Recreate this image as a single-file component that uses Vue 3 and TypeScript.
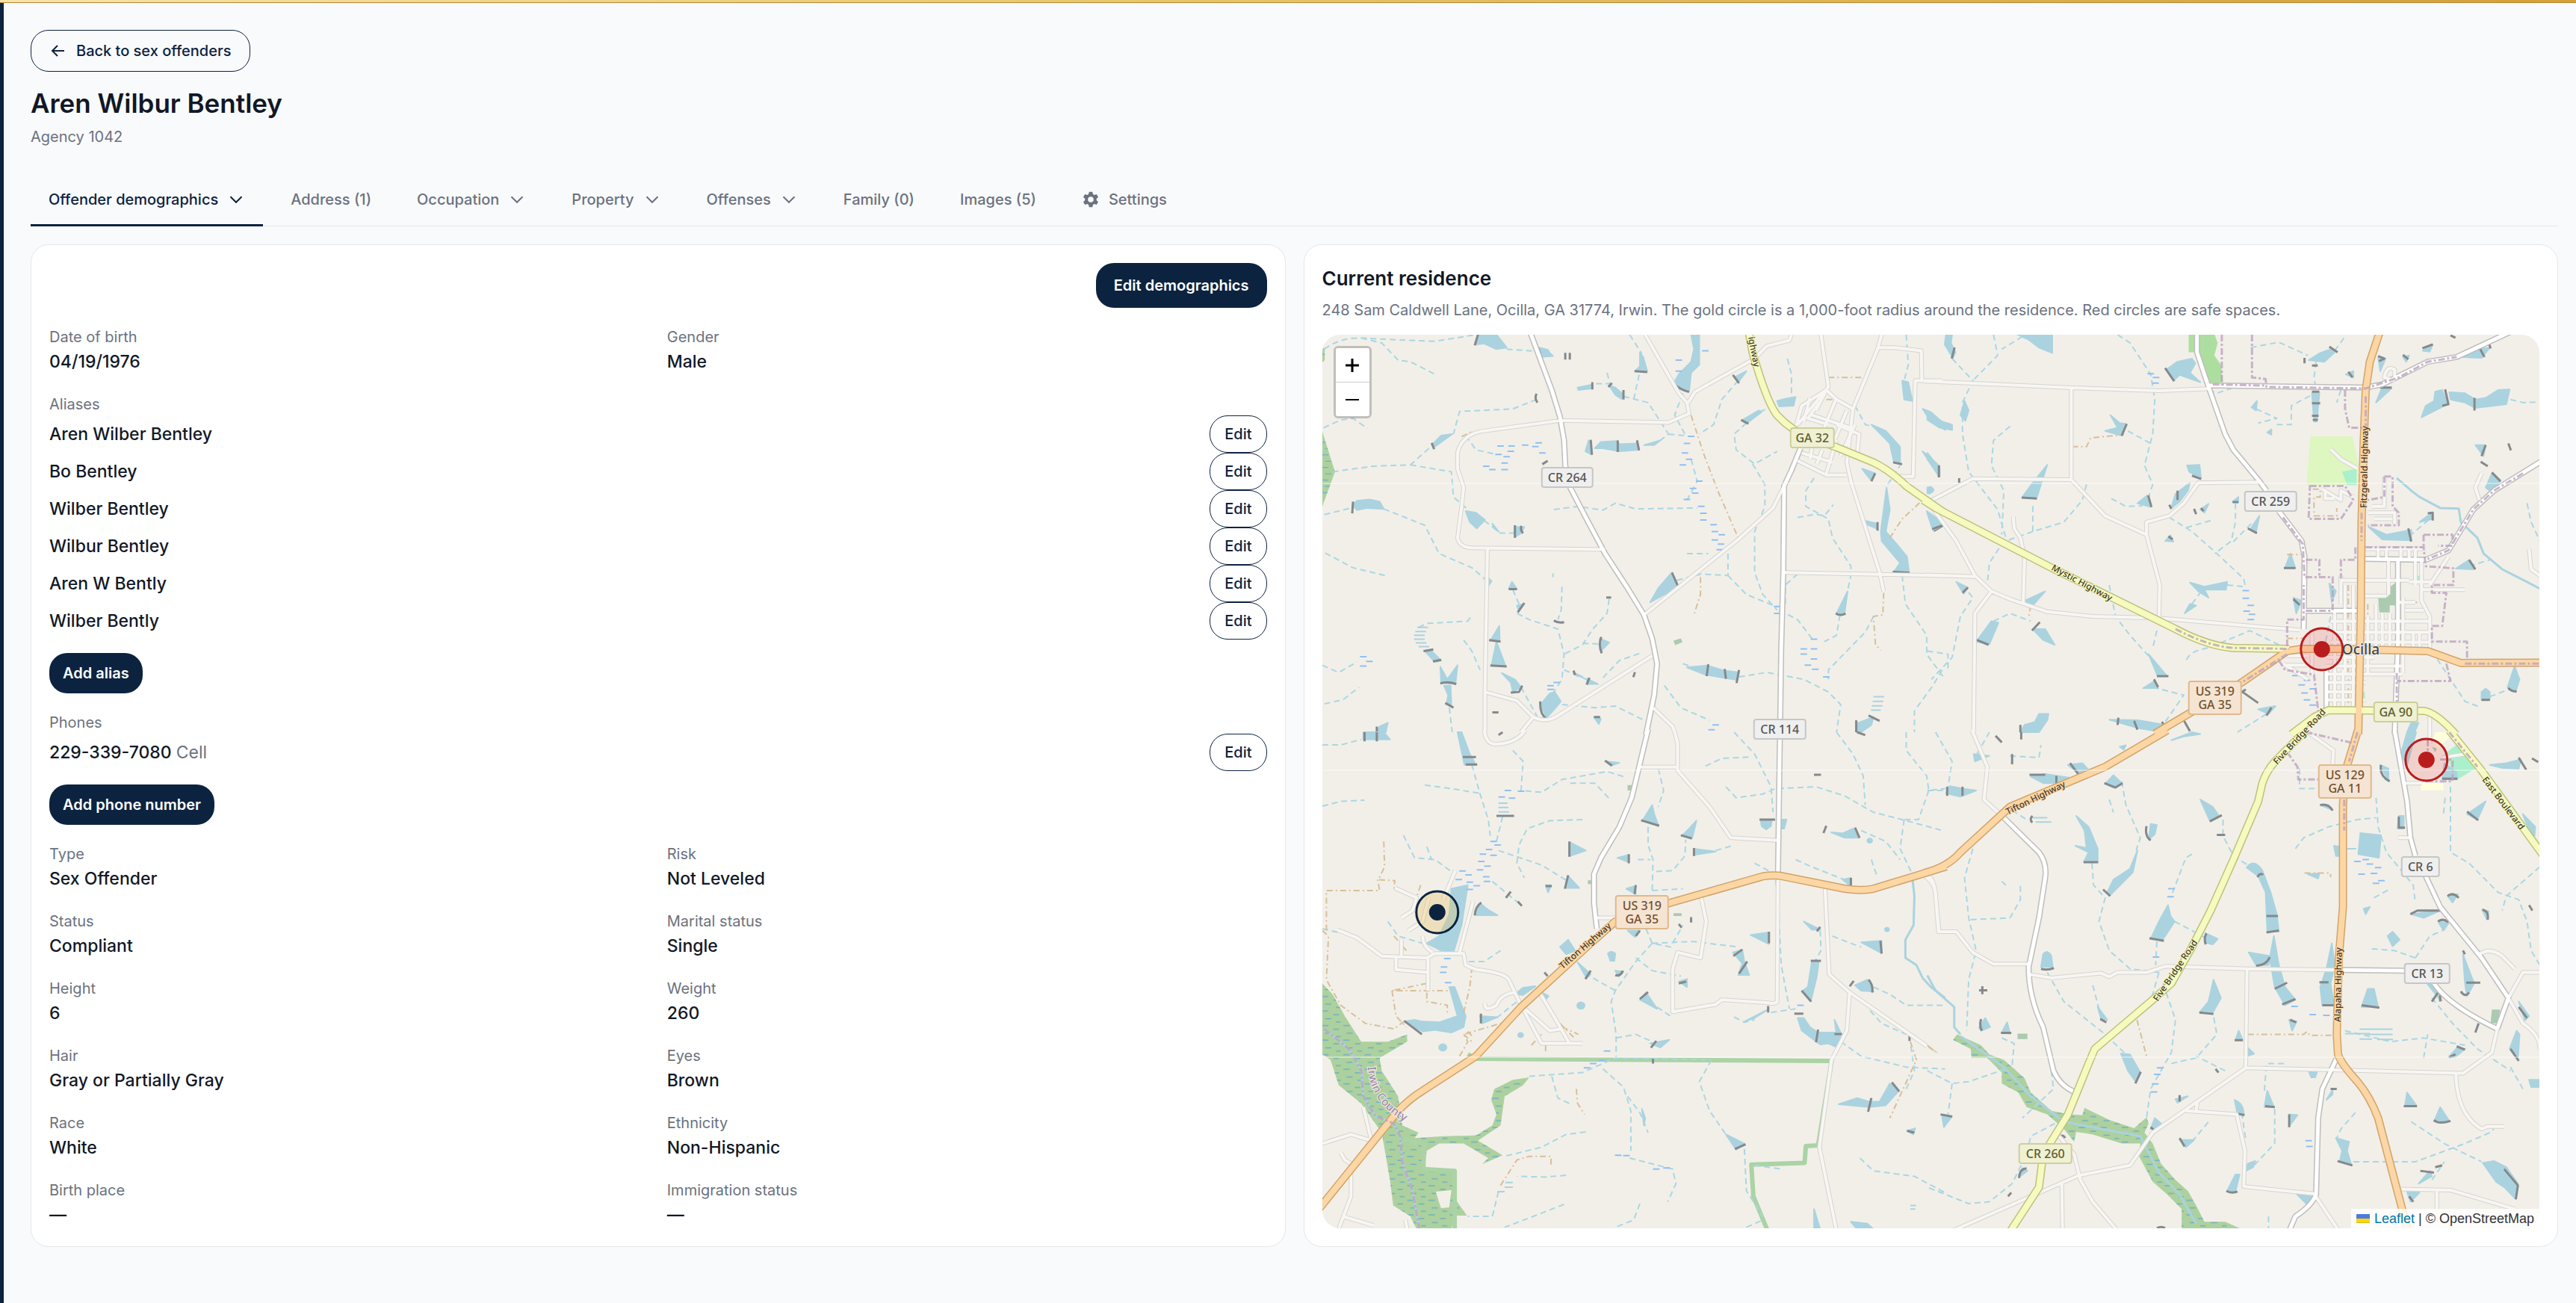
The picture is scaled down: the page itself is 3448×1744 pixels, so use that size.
<script setup lang="ts">
interface Field { label: string; value: string }
interface Tab { label: string; menu?: boolean; gear?: boolean; active?: boolean }
interface Sheet {
  at: string
  marsh?: string; wood?: string; golf?: string; green?: string; teal?: string; pale?: string
  water: string; streams: string; river?: string; stripes?: string; dams: string; tracks?: string
  bogs: number[][]
  minor: string; tertiary?: string; secondary?: string; primary?: string
  border?: string; reserve?: string
}
interface Shield { x: number; y: number; w: number; kind: string; lines: string[] }
interface RoadName { x: number; y: number; turn: number; text: string; kind: string; end?: boolean }

const tabs: Tab[] = [
  { label: 'Offender demographics', menu: true, active: true },
  { label: 'Address (1)' },
  { label: 'Occupation', menu: true },
  { label: 'Property', menu: true },
  { label: 'Offenses', menu: true },
  { label: 'Family (0)' },
  { label: 'Images (5)' },
  { label: 'Settings', gear: true },
]
const intro: Field[] = [
  { label: 'Date of birth', value: '04/19/1976' },
  { label: 'Gender', value: 'Male' },
]
const aliases = ['Aren Wilber Bentley', 'Bo Bentley', 'Wilber Bentley', 'Wilbur Bentley', 'Aren W Bently', 'Wilber Bently']
const details: Field[] = [
  { label: 'Type', value: 'Sex Offender' },
  { label: 'Risk', value: 'Not Leveled' },
  { label: 'Status', value: 'Compliant' },
  { label: 'Marital status', value: 'Single' },
  { label: 'Height', value: '6' },
  { label: 'Weight', value: '260' },
  { label: 'Hair', value: 'Gray or Partially Gray' },
  { label: 'Eyes', value: 'Brown' },
  { label: 'Race', value: 'White' },
  { label: 'Ethnicity', value: 'Non-Hispanic' },
  { label: 'Birth place', value: '—' },
  { label: 'Immigration status', value: '—' },
]

// The map is stored as four survey sheets, each with its own grid.
const sheets: Sheet[] = [
  {
    at: 'translate(-30 -128) scale(.54847 .42092)',
    marsh: 'M55 612L86 740L55 850ZM55 340L61 350V385L55 393Z',
    green: 'M912 1277L930 1270L934 1282L916 1291Z',
    water: 'M435 304H480L490 320L505 345L480 350L450 332L430 335ZM585 345L605 352L610 362L618 372L590 375ZM955 304H975L975 400L955 425L950 485L912 460L925 430L955 390L962 350ZM830 360L838 375L848 420H818L830 405ZM678 472L712 463V475L680 480ZM755 465L770 472L790 495L785 508L770 495ZM1060 440L1090 420L1070 455ZM1165 515L1185 508L1210 502L1205 530L1170 532ZM1078 577L1120 545L1127 550L1090 587ZM1470 450L1485 455L1495 515L1475 510ZM1520 540L1540 550L1575 590V607L1540 580ZM1395 590L1430 610L1465 660V715L1450 710L1440 650ZM1520 675L1560 720V755ZM1372 730L1405 745L1395 768ZM1432 790L1440 860L1430 930L1460 975L1482 1010L1487 1060L1450 1058L1465 1030L1420 960L1418 930ZM1530 865L1568 900L1545 925ZM1378 895L1410 905V922L1385 908ZM705 640L712 685L697 675ZM720 665L735 645L775 642L780 652L825 650L828 670L780 675L740 665ZM840 655L880 640L865 655ZM322 655L345 625L372 620L330 660ZM128 845L140 832L170 828L195 835L205 858L165 855L140 862ZM405 865L430 870L452 893L432 920L415 900ZM470 905L485 930L475 920ZM525 915L548 915L540 935L525 948ZM855 1155L875 1110L905 1065L925 1110L890 1130ZM510 1112L518 1090L530 1113ZM458 1075L468 1088L460 1103ZM466 1275L487 1230L488 1277ZM468 1355L480 1280L502 1357ZM493 1380L525 1400L540 1425L520 1440L515 1410ZM305 1310L320 1308L345 1340L330 1345ZM343 1360L360 1400L385 1355L380 1415L345 1412ZM352 1420H368L370 1480H358L362 1450ZM610 1445L622 1440L637 1470L618 1500L602 1522L588 1480ZM732 1270L755 1283L735 1310ZM700 1398L728 1415L703 1415ZM668 1378L690 1392L675 1388ZM945 1362L995 1356L1035 1372L1072 1378L1068 1402L1035 1395L990 1385ZM1337 1120L1330 1185L1320 1197L1310 1190ZM1360 1540L1400 1520L1395 1545L1370 1568H1360ZM185 1568L195 1550L215 1538L210 1568ZM1532 795Q1540 780 1547 798Q1540 815 1532 795ZM530 1165L548 1160L535 1182ZM718 1520L735 1525L730 1542Z',
    streams: 'M60 350Q100 310 160 315T330 325L430 304M150 315L200 330L240 385L270 390L330 430M505 350L590 358M578 510L520 540L440 545L390 548L375 620M58 600L100 575L130 570L165 602M80 740L180 722L270 718L320 660M270 718L370 740L375 820L410 860M60 876L125 855M205 858L305 910L340 1000L420 1045L455 1085M62 998L130 1045L215 1072M450 895L490 935H525M405 625L430 670L480 685M620 860L680 850L740 862L770 840L820 858L970 855M815 510L830 420M805 304L835 365M750 425L757 460H715M790 500L850 520L900 620L880 640M900 620L940 625M935 490L915 560L940 620M1070 450L1030 510L1010 590L975 620M1180 520L1120 550M1090 585L1060 620L1065 670L1110 715L1165 675M1105 715L1135 780V850L1110 930V1060L1130 1130L1165 1180M1190 380L1200 430V510M1255 760L1235 800V850L1290 890L1300 950L1345 1040V1070L1335 1130M1215 885L1260 875L1280 880L1302 845M955 700L970 770L945 830M1045 1000V1070L980 1065L920 1085M1045 1070L1090 1130L1165 1170M945 1000H997M1215 1065L1185 1100V1160M1480 304L1485 400L1475 450M1355 530L1380 590L1410 600M1435 780L1465 720M1470 1070L1478 1160L1530 1260V1320L1575 1400M640 1105L638 1180L630 1210M530 1190L560 1210L630 1240L645 1320L640 1400L620 1440M618 1063V1075M520 1115L535 1160M755 1145L750 1190L715 1240L690 1290L645 1320M690 1285L735 1288M645 1370L700 1400M740 1395L780 1340L835 1315M290 1235L310 1222L410 1215L418 1200M55 1355L95 1378L140 1345M60 1478L105 1465L145 1425M400 1275L420 1310L440 1370M540 1425L580 1520M640 1480L720 1490L770 1485L840 1530M365 1490L372 1568M890 1420L930 1490L1000 1530M935 1350L960 1362M1072 1392L1140 1378L1230 1400L1290 1440L1320 1480L1310 1568M1170 1180L1215 1210L1250 1270M1318 1195L1310 1260L1280 1280M1400 1200L1380 1250L1290 1370V1400M1568 1370L1545 1420L1500 1500V1568',
    stripes: 'M287 1235h26M282 1248h26M279 1260h26M279 1272h26M283 1284h26M290 1296h26M1400 1455h26M1398 1470h26M1396 1484h26M1394 1498h24',
    dams: 'M435 304L427 338M583 348L590 378M648 362V383M659 362V383M817 420L848 423M714 455V478M762 458L753 470M790 480V510M912 460Q930 480 950 486M1057 432L1072 458M1077 575L1095 587M578 492Q572 505 580 520M710 638L713 686M776 640V677M823 640L828 672M322 648L328 668M130 835L128 872M525 910V950M541 912Q537 925 545 935M908 1060L926 1112M510 1113H530M548 1157L532 1187M620 1213Q632 1222 645 1218M748 1140H760M462 1275L490 1280M465 1356L505 1359M302 1310L326 1305M325 1343L345 1338M343 1413Q360 1405 382 1415M515 1442L535 1440L543 1420M736 1265Q728 1290 737 1317M668 1372L672 1386M707 1395L700 1417M818 1377L814 1393M997 1352L993 1390M1037 1367L1040 1398M1072 1370L1066 1412M1308 1190Q1320 1200 1332 1190M1447 1058L1488 1061M1410 900V927M1547 928L1568 912M1404 745L1395 770M1448 710L1470 716M1388 1515L1415 1532M587 1470Q585 1510 602 1525M718 1520H733M470 1505H485M355 1475L375 1490M1560 720V758M1358 1530V1568M605 705L592 716M188 1550V1568',
    tracks: 'M955 560L985 680L1020 800L1070 950M1290 440H1380M978 1075V1130L963 1190M1425 1125L1423 1195L1400 1200L1405 1290L1418 1308M1440 950L1470 890L1520 830M395 628L420 612M1285 510H1310',
    bogs: [[490, 658], [517, 658], [550, 655], [583, 648], [485, 685], [515, 675], [505, 692], [455, 722], [500, 712], [470, 733], [500, 733], [592, 680], [575, 660], [945, 650], [955, 627], [940, 680], [950, 700], [935, 718], [975, 770], [960, 793], [965, 808], [945, 828], [980, 850], [985, 872], [985, 893], [1010, 908], [1013, 930], [1030, 940], [1013, 957], [1028, 970], [1025, 988], [925, 385], [990, 355], [925, 420], [155, 1328], [170, 1343], [155, 1358], [1165, 1168], [1165, 1190], [1255, 1272], [1230, 1303], [1255, 1303], [1230, 1320], [1255, 1335], [1240, 1355], [1258, 1368], [1285, 1392], [1015, 1545], [1005, 1560], [612, 1420], [627, 1410], [612, 1432]],
    minor: 'M843 304L925 490L945 520L950 555L900 583L635 577L440 612Q395 625 385 680V730L400 790L395 850L385 950Q390 980 420 982L745 987M458 982L452 1440L530 1468L570 1520Q600 1540 630 1515L860 1325M452 1440V1568M570 1520L540 1568M948 520L965 485L1110 380L1140 340L1195 322L1200 304M1272 304L1290 470L1215 590M1420 304L1410 350L1350 540L1335 710L1345 770L1415 1060L1425 1120M1412 345H1450L1517 355L1518 450H1568M1518 450H1502L1497 755H1455M1182 785L1155 855L1070 955L840 1195M1182 1060L1575 1070M1215 705L1285 750H1335M862 1490L910 1550L915 1568M1210 600L1225 530L1285 480L1310 510L1350 540M1245 505L1230 580M1268 520L1240 570L1290 590M1310 505L1280 600M1335 545L1305 640M1310 590L1365 620L1360 690M1355 590L1320 690M1250 560L1345 600M1225 680L1300 710M1310 640L1285 745M1250 665L1245 700M1275 670L1262 715M1285 480L1260 545',
    tertiary: 'M562 295L615 480L635 565L645 640L648 720L660 790L700 890L745 1000L800 1110L840 1195L860 1270L872 1350L865 1450L845 1575M1222 665L1200 735L1182 785L1180 1060L1175 1300L1172 1575',
    secondary: 'M1095 290L1105 360Q1140 520 1165 560Q1200 610 1250 635L1310 662L1400 710Q1440 735 1480 785L1575 872',
  },
  {
    at: 'translate(810 -128) scale(.55357 .42092)',
    wood: 'M632 304H695L702 330L694 370L710 400L715 455L678 458L650 360H632Z',
    golf: 'M926 627H1028L1043 720L1040 783H917Z',
    teal: 'M1003 740L1038 730V782H1015ZM1177 1070H1193V1087H1177ZM1050 1440H1058V1460H1050Z',
    green: 'M1090 1140L1115 1137L1120 1105L1135 1090V1165H1118V1187H1093Z',
    pale: 'M1015 1078H1040V1093H1015Z',
    water: 'M45 304H60L57 330L68 360L62 378L42 335ZM218 304H302V362L270 345L245 320ZM578 415L605 390L640 380L648 395L635 425L660 455L610 432L595 450ZM922 385L950 362L975 350L985 360L960 390ZM1292 375L1330 350L1360 345L1340 378ZM1245 480L1258 525L1235 540L1195 567L1205 530L1225 515L1228 485ZM1262 487L1300 490L1325 510L1350 505L1380 480L1408 478L1400 525L1325 537L1300 520L1265 510ZM80 560L90 515L100 545L92 578ZM430 610L460 600L443 560L465 585L482 588L470 625ZM0 550L35 580L60 590V607L30 600L0 575ZM0 680L30 730V755L0 700ZM230 820L258 770L290 718L265 820ZM633 740L628 720L658 718L662 762ZM590 855L600 810L635 775L630 800L610 835ZM508 840L532 815L540 852ZM782 920L803 880L795 930ZM575 960L588 942L595 962ZM1067 915L1110 940L1170 925V958L1100 955ZM1278 1048L1310 1020L1322 1050ZM865 1045L878 1000L890 1047ZM635 1092L670 1105L725 1090L722 1115L670 1115L680 1140L655 1120ZM622 1190L635 1160L650 1165ZM118 1280L155 1215L172 1220L150 1288ZM255 1240L285 1240L308 1290L280 1275ZM235 1150L285 1120L255 1165ZM0 870L38 910L15 925ZM535 1320L580 1390H557ZM522 1428L550 1405L558 1428ZM1420 1358L1432 1400L1422 1440L1403 1425ZM1340 1440L1350 1430L1360 1440V1465H1340ZM225 1568L235 1545L260 1535L270 1510L293 1510L290 1530L270 1568ZM440 1528L510 1530L575 1545L570 1568L510 1555ZM784 535L797 515L795 545ZM930 490H948L942 580H935ZM1325 655H1350L1345 690ZM1350 790L1365 745L1385 770L1365 805ZM1085 520L1100 470L1122 475ZM1190 900L1220 870L1222 890ZM1198 355L1222 335L1215 358ZM972 1095L988 1120L978 1155ZM800 1495L842 1485L825 1510ZM1160 1568L1170 1538H1188L1178 1568ZM885 1140L905 1150L892 1190ZM70 1090L98 1108L88 1128ZM660 860L680 842L670 870ZM738 835L752 820V838ZM1012 430L1030 420V440ZM822 615L832 605V622ZM1090 375L1108 380L1095 420ZM1150 375L1165 370L1158 390ZM0 790Q10 785 14 800Q8 812 0 808Z',
    streams: 'M60 380L110 450L85 520V620L100 740L170 860L190 950L150 1030L145 1095M160 304L170 370L110 450M230 310L180 350M200 595L160 640L155 720L185 800L180 940M460 304L490 330L540 430L550 510L545 620L525 720L545 780L535 820M485 610L540 650M385 780L375 830L330 900L255 930V840M255 930L190 960M445 825L480 850L520 848M782 345L850 328L920 370M985 355L1010 310M940 390L935 440L940 480M795 540L845 570L800 585M845 590H880V530L930 495M585 885L640 930L700 1000L765 1080L770 1110M745 840V900L735 960L695 1000M783 905L740 962M685 895L620 920M725 1100L765 1105M640 1160L665 1115M440 1100L455 1200L490 1260L545 1340M555 1245L545 1300M850 1290L780 1245L680 1300Q630 1310 625 1345M85 1100L110 1140L80 1200L60 1330L10 1400M160 1215L200 1190L250 1215M0 1310L50 1320V1370M545 1425L620 1450L570 1545M1410 510L1440 520L1481 518M1450 840L1460 900L1481 960M1165 945L1215 890M1310 1040L1360 1020M1220 1310L1265 1400L1300 1470L1340 1490M1360 1455L1410 1430M975 1200L960 1300M820 1510L750 1568M680 480L700 490L735 475M1000 480L990 520',
    river: 'M1135 760L1170 800L1190 820L1240 855L1285 857L1290 900L1330 950L1345 1000L1390 1050L1450 1090L1490 1118',
    dams: 'M66 345L59 380M575 410L597 452M972 342L992 360M912 378V395M1252 478L1260 525L1245 530M1323 505V545M482 588L470 625M28 720V757M77 760V775M228 822L265 825M534 815L542 852M640 752L662 763M605 800V830M585 845L590 858M645 858L650 875M662 855L668 865M775 920L797 935M583 945L593 955M1163 920L1170 962M1310 1020L1325 1050M862 1046H890M885 1145L900 1163M120 1275L148 1290M272 1218L253 1245M555 1390H583M548 1400L558 1425M1405 1427Q1412 1440 1425 1438M1340 1465H1360M832 1490L820 1515M462 1522L460 1545M500 1532L508 1560M567 1535L575 1550M1350 655L1340 690M1405 650L1411 672M1365 742L1386 770M1338 708L1355 722M1210 872L1222 870V895M1335 345L1347 375M1357 328L1362 348M1197 347L1222 335M1090 372L1105 380L1092 388M1150 368L1163 382M930 485H948M930 522H950M930 562H946M932 575H944M1095 472H1123M12 922L38 910M85 1125L98 1108M620 1530L635 1565M930 402H944M1018 422L1028 440M1265 306L1277 314M738 836H752M225 1545V1568M762 1440L800 1475M770 1432L755 1445',
    tracks: 'M350 660H385L395 632L475 622M870 1003H912M932 795H950V820H935V880H990V855M250 1165L245 1205M1018 1100V1490M1065 1160V1330M1170 1155H1190M870 1270H910',
    bogs: [[540, 428], [553, 440], [552, 458], [770, 1118], [770, 1142], [782, 1165], [772, 1183], [785, 1193], [782, 1210], [785, 1228], [890, 1388], [918, 1403], [905, 1418], [932, 1430], [912, 1443], [918, 1465], [932, 1482]],
    minor: 'M-5 452L100 458L350 473L560 482L680 476M348 473V765L430 880L530 940M0 838L110 762L350 765M800 773L655 775L620 840L585 880L530 900V940L562 1100L560 1205M15 860L70 960L115 1070L155 1120L200 1145L290 1185L400 1200L560 1205L780 1230L900 1243M-5 1068L115 1073M155 1120L115 1190L112 1568M208 882L210 920L225 950L235 1010L232 1155M1340 745L1325 790L1335 830M1130 450L1105 440Q1110 400 1130 415L1130 440M1455 985L1460 1050L1481 1070M975 668L1000 700L1040 730M1000 1085H1165M1050 1135H1110M975 1215H1215M980 1250H1220M975 1282H1215M965 1330H1080M965 1358H1150M965 1383H1150M965 1410H1060M965 1440H1050M965 1465H1060M1060 985H1205M1165 1090H1220M1195 1115H1300M870 1325H920M870 1355H920M1000 1070V1160M1010 1100V1380M1030 1100V1490M985 1185V1490M1005 1370V1490M1065 1200V1380M1085 1160V1300M1100 1190V1300M1115 1020V1130M1118 1190V1300M1150 1140V1380M1180 980V1100M1165 985V1015M1145 985V1015M1090 985V1015M1110 985V1015M1195 1020V1150L1215 1200V1300M1215 1100L1260 1010M930 1250V1380M1065 870H1130V905M1080 890H1125M1075 850H1105V755M955 795L1000 830V800L1030 820M962 795V825H985M1175 1250V1300M1190 1250V1300M1155 1180H1200M1138 1155H1180M1215 1500V1568M860 1350L920 1400',
    tertiary: 'M652 295V360L680 470L720 620L740 670L800 765L820 800M850 865L905 960L912 1010L910 1240M680 465L820 468L1060 472L1100 462L1210 390L1280 375L1410 295M1490 702L1370 800L1320 860L1260 990L1205 1020M1055 1017L1205 1020M1138 1020V1280L1130 1575M915 1182H1045M965 1370V1500',
    secondary: 'M-10 830L20 855L300 1045L600 1240Q680 1295 740 1300L875 1303M880 1575L935 1520L970 1498L1200 1500Q1230 1505 1278 1575',
    primary: 'M1094 295L1070 390L1060 480L1055 650L1050 900L1048 1200L1042 1575M900 1303H1000L1210 1310L1290 1348L1490 1347M905 1303L870 1310L760 1410L550 1573',
    border: 'M712 304V465M785 304V440L818 445L820 470L1060 475L1140 440L1210 390L1280 375M690 462L820 466M1010 480V540L1020 600H1055M925 785H1010L1030 830L1000 890H922ZM1105 755H1125V850L1140 870V910H1065M1105 755V820L1065 830M860 885L908 970L912 1075H980V1180M915 1020H948V1070M1035 980V1020H1000V1080M1060 980H1200L1205 1040L1272 1047V1100H1220V1125H1255L1245 1230H1220V1280H1305V1335M1255 1350L1265 1405H1135M1200 940H1270V975H1235M1200 940V980M1440 745L1370 800L1320 860L1260 990L1205 1020M870 1295V1210H910V1100M850 1340L865 1370L935 1385L945 1500M600 1240Q680 1295 740 1300L875 1303M1300 1350H1481M1060 500V600M1050 870V960M870 1320L760 1410M1135 1380V1480M915 1182H980',
  },
  {
    at: 'translate(-30 532) scale(.54847 .48724)',
    marsh: 'M55 690L80 720L110 780L150 850L215 850L262 830V850L195 895L200 930L240 1000L250 1080L290 1100L280 1115L350 1110L430 1108L470 1080L480 1050L467 1010L475 980L520 955L560 948L545 970L500 1000L490 1080L435 1122L495 1162L445 1187L460 1170L400 1130L340 1130L310 1150L305 1195L375 1205L378 1280L408 1328H378L370 1365H285L270 1330L228 1300L220 1230L200 1100L150 1020L95 970L75 900L55 885Z',
    green: 'M912 497H932V505H912ZM800 145H812V160H800ZM703 407H712V417H703Z',
    water: 'M385 0H395L405 30L415 60L430 90H402ZM155 20V0H205L220 20ZM838 240L860 200L865 225L875 255ZM660 303L698 325L660 340ZM932 285L950 265L968 243L958 290ZM962 320L1015 328L962 337ZM775 345L803 337V357ZM797 430L820 422V445ZM655 395L682 428H648ZM600 420H614L606 440ZM1125 242H1152L1150 258L1138 267L1127 258ZM1175 240H1188L1182 265H1172ZM1297 275L1325 278L1350 265L1365 290L1330 290ZM370 430L410 420L395 530L375 605L345 600L310 580L340 560L365 500ZM428 503L440 470L460 488L483 503ZM365 700H378L405 780L400 810L370 825L330 818L300 822L255 795L280 790L300 795L340 797L385 780ZM440 780L482 783L445 800ZM525 720L545 702L575 698L545 722ZM582 710L607 725L600 735ZM635 590L655 570L672 600L650 610ZM752 608Q760 598 770 608L768 628H758ZM678 632L710 665L700 675ZM770 655L790 658L778 672ZM830 735L845 715L872 760ZM1100 557L1145 550V582ZM1370 577L1420 573V607ZM1230 520L1270 542L1250 543ZM1057 605L1080 598L1085 630L1097 667H1070L1080 635ZM1250 628H1267L1262 670L1247 740L1225 712L1240 700ZM1355 695L1385 680L1400 712L1370 710ZM1215 785H1230L1245 810L1265 825L1305 825L1320 832L1310 865L1290 855L1270 858L1225 820ZM1305 790L1322 830H1310ZM855 855L902 845L880 866ZM1085 795L1145 760L1110 785ZM925 685L945 678V700ZM1315 1022L1360 1005L1390 1015L1415 1015L1440 965L1462 985L1430 1025L1390 1030ZM1040 1105L1085 1130L1065 1147ZM1482 1095L1502 1088L1497 1105ZM1255 1310L1270 1365H1255ZM1345 1345L1385 1350L1400 1365H1360ZM800 545H830L818 563ZM835 1035L843 1060L840 1080ZM677 751A9 9 0 1 1 695 751A9 9 0 1 1 677 751ZM1428 542A5 5 0 1 1 1438 542A5 5 0 1 1 1428 542ZM1385 298A6 6 0 1 1 1397 298A6 6 0 1 1 1385 298ZM533 832A6 6 0 1 1 545 832A6 6 0 1 1 533 832ZM340 866A9 9 0 1 1 358 866A9 9 0 1 1 340 866ZM745 80L780 84L760 92ZM1325 405L1345 400L1343 422Z',
    streams: 'M55 35L100 35L150 20M420 90L440 170L460 240L465 285M495 232L480 300M305 145L370 155L440 168M55 203L100 190L158 187M520 50L545 80L540 160L590 165L640 130L750 108L790 122M660 140H720L760 188M690 240L610 243L555 265L535 310L530 360L548 400M485 325L590 365L655 410M253 283L280 345L330 350L370 383M310 315L322 350M470 410L540 475M875 100L888 160L875 205M850 260V310L862 350L860 445M825 350H855M870 383L910 380L940 340L942 295M1015 325L1055 312M860 435L935 430M1040 150L1065 180L1130 170L1160 155L1260 150L1330 175L1400 220L1470 240L1568 270M990 93L1030 72L1100 68M1060 0L1110 60L1150 150L1155 220M1310 0L1350 60L1375 120L1380 200M1480 0V50L1530 120L1535 160L1575 155M1535 160L1510 240H1475M1370 270L1430 300L1465 350M1475 240L1465 320L1495 390M1210 350L1250 370L1340 410M1395 350L1410 400M1110 360L1160 390L1168 480L1175 640L1195 760M860 580L960 575L1070 590M860 580L820 630L770 710L760 740L772 830V893M820 620L860 655L930 670M770 710L700 665M845 540L860 580L905 590L935 530M1300 560L1340 578L1370 590M1270 545L1272 600L1258 628M772 840L820 830L860 850M872 755L905 780M490 600L450 630L405 630M215 520L240 560L300 580M55 540L95 550M480 785L530 740M1060 782L1085 797L1110 790M1150 770L1210 760M1320 850L1370 890L1480 920L1575 925M1400 700L1440 720L1480 750H1575M1392 765L1420 800L1480 830M560 945L690 935L770 895L990 900M615 945L630 1005L662 1022M740 925L790 975L808 1040V1150M800 1000L830 1045L850 1100M1005 900L975 960L1000 1040L1040 1105M1085 1145L1090 1260L1130 1330M698 1098L650 1105L590 1140L500 1165M650 1217L600 1222L530 1220M485 1262L470 1330L410 1330M645 1297L570 1330L500 1360M830 1295L815 1340L770 1360M805 1170L910 1200L918 1240L898 1290M1110 1190L1175 1200M1367 1170L1400 1205L1500 1220L1575 1265M1480 980L1500 930L1490 850M1090 1360L1130 1340',
    river: 'M1495 400L1500 450L1498 530L1478 570V620L1505 640L1520 675L1540 700L1575 730M60 815L120 870L150 930L155 1000L185 1055L230 1075L245 1110L250 1180L275 1260L292 1365',
    stripes: 'M485 195h22M485 207h24M485 219h26M502 1237h18M500 1250h20M482 1262h18M1490 1300h14M1490 1310h12',
    dams: 'M398 68H430M405 89H433M158 0V25M188 0V25M480 230H523M833 242L877 257M658 300V342M930 283L957 292M962 318V340M803 335V360M820 420L817 445M655 393L647 430M600 423H615M1122 240H1160M1278 277L1285 257M1355 262L1366 290M745 78L762 92M1255 117H1272M443 468Q428 480 427 503M255 793L298 830M442 773V800M515 438L503 455M532 465L542 477M710 655L697 678M788 655Q785 670 770 668M850 714L830 733M1145 548V580M1417 573L1420 608M1080 597L1058 615M1092 630L1072 663M1247 628H1272M1225 710L1248 740M1388 680Q1400 695 1397 715M1352 683L1342 698M1265 817L1260 852M1207 773H1229M1305 829H1323M870 848L857 867M1143 752V770M1395 1005L1387 1043M1445 962L1463 987M1062 1145L1088 1132M925 690L943 685M955 508V523M925 527L932 537M1345 400V425M862 897V910M820 560L830 545M1482 1095L1500 1100M1488 830V848M597 660L605 670M1270 535L1262 547M485 8L495 0M1360 0L1380 8',
    tracks: 'M205 300L207 370L192 405L232 408L230 430M65 545V435H195L190 405M55 545L70 560L65 680L100 750L160 800L230 815L260 790M310 690L225 710H365M225 710L235 780L260 810M390 890L410 850L400 830L490 800M400 830L420 850M410 822L425 840M635 800L670 840M640 810L680 830M565 860L590 830M675 980L678 1020L695 1050M490 1245L530 1175L560 1165H613V1190M1490 850L1505 900L1440 1060M1535 865L1555 880M310 715V740L360 750V770M400 770L415 700L420 650M230 560L260 600M295 420L280 470M310 690L313 660M600 860V880',
    bogs: [[508, 160], [540, 162], [493, 178], [518, 181], [473, 300], [483, 310], [462, 322], [447, 335], [473, 338], [443, 355], [458, 368], [440, 378], [397, 381], [412, 392], [455, 397], [388, 405], [415, 412], [457, 410], [432, 422], [415, 432], [360, 622], [352, 645], [350, 660], [362, 688], [750, 876], [738, 901], [716, 910], [701, 922], [1222, 750], [797, 1163], [777, 1162], [870, 1200], [895, 1197]],
    minor: 'M832 96H922M915 0L922 30V105L1000 205L1052 290L1165 297M1167 400L1165 740Q1160 748 1140 743L1030 735L1015 748L910 768V650L922 605L978 620L992 520L980 455M1282 430L1292 665L1342 715L1530 862M1342 715L1335 820L1298 900L1268 1140L1310 1370M1530 390Q1550 405 1552 450L1560 548H1575M450 -5Q455 35 480 33Q530 30 550 -5M92 543L140 565L200 615L310 620L330 608H400L405 640L430 652Q500 660 510 680L540 750L590 855H690M585 715L620 780L658 855M540 750L610 820L640 815M313 620V710M235 620V652L313 660M248 570V615M380 380L350 460M232 428L285 455L275 490L248 510M423 465L390 605M525 715Q490 720 480 750Q450 770 452 745M300 560Q300 590 325 605M315 455L300 520L265 545M55 1130L125 1105L175 1122L155 1030M175 1122L125 1205V1275L93 1370M105 1330L180 1355M100 1155L110 1175L125 1185V1205M725 510H770M258 1340L262 1365',
    tertiary: 'M850 -8L825 110L810 180L780 260L735 345L718 390V470L725 540M1172 -8L1167 390',
    primary: 'M1578 369L1400 430Q1370 437 1330 430L1170 394Q1150 392 1130 396L900 470L770 520L700 590L540 755L430 890L300 985Q270 1005 240 1040L45 1312',
    border: 'M60 815L120 870L150 930L155 1000L185 1055L230 1075L245 1110L250 1180L275 1260L292 1365',
    reserve: 'M410 885L430 897L1298 903L1265 1135L1235 1137L1232 1183L1102 1188L1107 1275L1142 1370M250 1118L302 1130V1200L378 1205V1370',
  },
  {
    at: 'translate(810 532) scale(.55357 .48724)',
    marsh: 'M72 830L130 860L150 885L185 900L235 950L250 990L300 1040L340 1050L375 1052L380 1032L440 1065L500 1088L530 1058L535 1075L525 1100L545 1130L565 1185L600 1230L630 1260L650 1300L670 1345L720 1345L760 1365H615V1310L580 1270L545 1235L512 1165L515 1130L470 1130L400 1105L360 1098L355 1125L330 1090L290 1050L240 1030L220 990L180 965V935L145 895H107L105 870L62 845Z',
    teal: 'M1250 60L1285 30L1325 100L1282 130Z',
    green: 'M218 828H242V843H218ZM1365 762H1385L1380 800H1362ZM1220 40L1232 45L1228 55Z',
    pale: 'M1230 0H1258L1265 10L1235 45L1222 20ZM1193 140H1248V160H1193Z',
    water: 'M250 122L285 115L345 125L310 140L280 140ZM340 90L375 85L395 110L365 112ZM45 168L55 148L85 155L118 160L80 177ZM590 22L640 0L660 5L620 12ZM430 142L450 118L470 140L450 152ZM660 185L690 205L705 230L683 243ZM540 252L555 255L550 280L535 295ZM358 312L385 318L380 270L360 230L390 260L412 320V357H378L390 330ZM435 440L450 405L490 375L508 325L497 385L440 450ZM540 568L560 520L582 475L588 505L598 520L568 572ZM672 552L702 568L690 583L672 578ZM772 372Q790 345 810 380L830 440L845 500L850 548H822L818 440L800 395ZM838 560L850 640L865 700L890 735L865 750L840 700L828 620ZM777 605L830 615L825 640L795 640ZM978 580L985 640L975 690L983 750H955L950 700L965 650ZM1047 277L1097 283L1092 345L1042 335ZM983 312L1003 315V340H988ZM950 200H970L980 214ZM1140 230H1152V265H1137ZM1095 90L1115 100V135ZM1145 60L1160 0H1182L1160 90ZM1250 85L1280 110V130H1245ZM1360 90L1400 85L1435 75L1430 100L1390 98ZM1305 225L1350 190L1330 240ZM1440 225L1470 260L1468 285L1455 270ZM1050 755L1065 705H1080L1090 755ZM1113 560L1125 548L1142 570L1125 588ZM1235 520L1260 525L1248 545ZM1258 450L1283 445L1270 468ZM1342 488L1357 492L1353 515ZM1295 610L1305 640L1322 690L1305 725L1300 690ZM1208 690L1220 690L1240 735ZM1170 500L1240 490L1200 510ZM658 770L680 740L692 680L710 730L688 775ZM275 645L280 610Q290 595 300 615L303 645ZM125 812L140 785L152 810L130 820ZM180 825L193 797L200 828ZM412 755L435 790L420 787ZM468 883L490 885L515 935L505 962L485 930ZM540 1090L550 1060L565 1075L555 1092ZM745 845L753 820L762 845ZM773 865L790 883L773 890ZM875 790L893 795L882 820ZM815 1030L822 985L838 1030ZM743 1010Q765 1020 765 1050H750ZM875 1050L895 1052L875 1082ZM610 1120L645 1120L625 1140ZM35 1050L60 1055L40 1085ZM725 1260L745 1215H755L745 1262ZM770 1205L775 1185L793 1178L788 1195ZM965 1010L980 982V995ZM988 1115L1020 1125L1015 1150L1025 1188L998 1175L1003 1150ZM1155 1025L1160 990L1182 1025ZM1225 1070L1240 1030L1262 1068ZM1343 1183L1370 1178L1400 1195L1428 1240L1423 1283L1395 1250L1375 1235ZM1188 1240L1215 1205L1220 1220ZM890 1265L930 1270L922 1302ZM1260 893L1280 868L1300 870L1275 893ZM1408 870L1425 820L1432 830L1428 900ZM1430 740L1455 780L1445 792ZM1455 955H1481V975H1460ZM1160 1262L1190 1265L1168 1290ZM922 930H943L938 948H928ZM600 1008L630 1000L605 1018ZM222 1222L230 1197L242 1205ZM920 390L948 388L945 402ZM1055 485L1070 480L1060 500ZM112 60L150 65L115 80ZM465 40L480 36L475 48Z',
    streams: 'M0 160H50M120 60L150 0M200 65L270 70L275 35M205 215L240 240M110 320L90 400L100 510L118 600L100 680L95 820M105 515L165 512L200 510L225 460V415M398 360L402 420L430 455L415 520L440 600L490 650L560 660M470 135L480 200L515 290L505 325M640 335L625 345L590 450M598 520L640 545L672 565M555 575L552 640M715 240V285L740 340L775 365M890 320L910 290L970 260L1040 240L1085 235M1085 180L1090 260L1110 330L1175 420L1180 470M1080 455L1120 430M1265 150V330L1310 360L1380 440L1430 460L1450 520L1460 600L1481 640M1481 370L1400 450L1390 490M400 695L415 760M570 690L600 790L590 880L540 980L530 1060M590 910L650 895L700 830L692 780M290 660L330 740L430 830L480 885M560 660L540 740M720 930L650 890M815 985L820 910H870M840 1035V1130L790 1190M760 1045L770 1120M640 1125L680 1070M1035 1045L1000 1090L990 1115M1010 820L1120 850L1200 840L1300 860M1180 620L1130 600L1075 595M1180 620L1215 560L1245 545M1220 730L1270 800L1330 870L1410 930M1200 895L1210 830M1030 1180H1180L1300 1130L1360 1100L1370 1090M1170 1070L1250 1130L1340 1180M1220 1230L1250 1180M1410 920L1440 980M0 930L60 965L100 960L190 925M60 965L50 1050M180 840L210 855L205 915M300 930L305 980L230 1060M350 1050L250 1110L240 1160L205 1240L150 1290L100 1295L0 1250M825 1330V1365M440 185L450 220M1252 180L1248 225M900 100V155H945M780 880L765 900M180 410L190 420M20 0L60 80L50 150',
    river: 'M0 668L20 710L65 755V810L80 830M80 835L185 920L250 1000L330 1070L420 1090L515 1110L560 1210L610 1270L650 1350',
    stripes: 'M1045 816h80M1010 828h60M1060 830h65M1045 843h30M1088 844h38M255 235h35M262 247h38M1015 320h22',
    dams: 'M247 117H285M312 120V140M345 85L365 115M205 60V88M48 150V175M85 150V175M227 0V20M428 140L455 152L472 140M683 245L712 228M700 282H720M530 258Q525 285 540 297M378 357H413M425 432L442 450M254 230Q246 240 254 248M537 566L572 573M675 553Q668 565 673 583M798 398Q805 385 812 392M820 505H848M820 550L850 545M828 618Q820 640 795 642M840 705L870 688M858 748L890 733M955 750H983M948 687H970M950 200Q970 195 980 215M1140 232V262H1155M1097 90Q1092 120 1118 135M1430 70L1448 103M1462 72L1477 82M1245 128H1282M1305 218L1332 242M1168 500L1185 490H1245M1235 520Q1245 510 1260 522M1258 450Q1270 438 1285 455M1342 488Q1358 490 1355 515M1455 475L1463 490M1050 750L1093 757M1303 688H1337M1290 712Q1300 730 1310 715M1220 740L1238 710M1240 712V740M1325 825L1333 800M658 770L692 774M275 650Q290 655 306 648M130 788Q125 805 132 820M178 826H203M418 788L433 797M503 965L516 933M743 846H763M817 1027L840 1030M745 1047L767 1052M875 1050V1085M610 1115L622 1138M32 1050L60 1056M723 1260Q735 1268 750 1262M992 1178L1028 1190M1152 1027H1184M1225 1065Q1235 1078 1265 1068M1395 1200L1428 1245L1423 1283M1192 1205L1225 1210M1228 1195L1245 1190M1410 870L1430 903M1280 863L1300 872M1262 893L1277 885M1430 755L1450 785M133 698V720M125 709H145M975 980H990M222 1225Q222 1200 240 1198M195 1275L203 1265M610 997V1015M540 1085L550 1095M877 790L892 797M1165 1275L1175 1290M697 925L704 935M165 10L180 28M1295 600L1300 610M320 1110Q330 1105 333 1115M555 1362Q565 1356 575 1362',
    tracks: 'M0 860L22 880M507 790L530 890M775 830H910L918 822L925 833H985M912 387H975V398M1225 690L1245 740',
    bogs: [[590, 430], [588, 452], [553, 618], [1060, 350], [1040, 355], [1070, 362], [1090, 372], [1050, 390], [1080, 388], [1098, 408], [1085, 415], [888, 753], [932, 776], [965, 778], [563, 922], [556, 940], [551, 966], [548, 988], [922, 1122], [924, 1138]],
    minor: 'M108 -5L145 95L137 185L185 235M-6 396Q20 415 20 450L27 548H70L110 605L160 637H245M245 665L300 675L420 662L440 672L460 660H530L575 643L775 650L1005 653M773 650L770 922L545 1100L490 1190L365 1218L60 1370M770 922L1000 928L1295 937L1365 880L1378 815M1278 937Q1280 1050 1340 1090L1355 1083H1395M1405 730L1440 660H1485M1405 730L1440 800Q1481 830 1481 870M1335 610Q1360 590 1390 615L1420 650M653 1015L650 1040M625 1040L748 1050L768 1150L765 1248L935 1268L995 1370M315 1105L355 1160L370 1230L400 1290L460 1370M325 1240L327 1370M1145 1255L1265 1258L1420 1310M1232 1258V1310M920 0L982 50L980 90M1138 290H1168M1150 140H1195M1215 0V30M1245 70L1300 60',
    tertiary: 'M185 235L270 330Q290 360 285 400L270 510L245 645Q245 730 280 810L305 930Q320 970 355 988M1130 -5L1160 190L1168 290L1180 340M1205 395L1240 480L1340 620L1405 730L1378 815M1005 653L1155 655M1225 690Q1260 750 1378 815M990 895L955 980L945 1060L940 1270Q930 1300 890 1330L875 1370',
    secondary: 'M915 -5L845 75Q820 105 810 140L800 190L740 350L685 490L640 590L590 690L540 740L405 870L390 910L340 1050L280 1160L270 1250L200 1372M1262 -5L1340 105L1490 340',
    primary: 'M580 -5L430 95L200 205L80 330Q50 370 -8 387M1041 -5L1010 110L1005 200V480L995 620L990 830L993 885Q1000 910 1040 960Q1070 1000 1090 1060L1162 1370',
    border: 'M915 0L1030 30M870 55L895 95L897 130H945M1210 20V80M1262 0L1330 95M1008 185V270M1040 0L1020 80M1240 75H1270V135H1200',
  },
]

const bogPath = (points: number[][]): string => points.map(([x, y]) => `M${x - 8} ${y}h16`).join('')

const shields: Shield[] = [
  { x: 294, y: 178, w: 68, kind: 'county', lines: ['CR 264'] },
  { x: 627, y: 125, w: 58, kind: 'state', lines: ['GA 32'] },
  { x: 1235, y: 210, w: 69, kind: 'county', lines: ['CR 259'] },
  { x: 578, y: 515, w: 69, kind: 'county', lines: ['CR 114'] },
  { x: 1160, y: 464, w: 70, kind: 'federal', lines: ['US 319', 'GA 35'] },
  { x: 1408, y: 492, w: 58, kind: 'state', lines: ['GA 90'] },
  { x: 393, y: 751, w: 70, kind: 'federal', lines: ['US 319', 'GA 35'] },
  { x: 1334, y: 576, w: 70, kind: 'federal', lines: ['US 129', 'GA 11'] },
  { x: 1445, y: 699, w: 50, kind: 'county', lines: ['CR 6'] },
  { x: 1449, y: 842, w: 60, kind: 'county', lines: ['CR 13'] },
  { x: 933, y: 1083, w: 70, kind: 'state', lines: ['CR 260'] },
]
const roadNames: RoadName[] = [
  { x: 1017, y: 332, turn: 28, text: 'Mystic Highway', kind: 'yellow' },
  { x: 1395, y: 177, turn: -89, text: 'Fitzgerald Highway', kind: 'orange' },
  { x: 352, y: 818, turn: -41, text: 'Tifton Highway', kind: 'orange' },
  { x: 955, y: 620, turn: -26, text: 'Tifton Highway', kind: 'orange' },
  { x: 1142, y: 851, turn: -56, text: 'Five Bridge Road', kind: 'yellow' },
  { x: 1308, y: 538, turn: -47, text: 'Five Bridge Road', kind: 'yellow' },
  { x: 1581, y: 627, turn: 53, text: 'East Boulevard', kind: 'yellow' },
  { x: 1360, y: 870, turn: -89, text: 'Alapaha Highway', kind: 'orange' },
  { x: 582, y: 43, turn: 79, text: 'ighway', kind: 'yellow', end: true },
]
</script>

<template>
  <div class="ribbon"></div>
  <div class="shell">
    <main class="page">
      <a class="back" href="#offenders">
        <svg viewBox="0 0 24 24" aria-hidden="true"><path d="M20 12H4.500M11 5l-7 7 7 7" /></svg>
        Back to sex offenders
      </a>
      <h1>Aren Wilbur Bentley</h1>
      <p class="agency">Agency 1042</p>

      <nav class="tabs">
        <button v-for="tab in tabs" :key="tab.label" type="button" class="tab" :class="{ active: tab.active }">
          <svg v-if="tab.gear" class="gear" viewBox="0 0 24 24" aria-hidden="true">
            <path fill-rule="evenodd" d="M9.800 1.800h4.400l.8 3.100 1.700 1 3.100-.9 2.200 3.800-2.300 2.200v2l2.300 2.200-2.200 3.800-3.100-.9-1.700 1-.8 3.100H9.800L9 19.100l-1.700-1-3.100.9L2 15.200 4.300 13v-2L2 8.800 4.200 5l3.100.9 1.700-1zM12 8.200a3.800 3.800 0 1 0 0 7.600 3.800 3.800 0 0 0 0-7.600z" />
          </svg>
          {{ tab.label }}
          <svg v-if="tab.menu" class="chevron" viewBox="0 0 24 24" aria-hidden="true"><path d="M4.500 8.250l7.500 7.500 7.500-7.500" /></svg>
        </button>
      </nav>

      <div class="columns">
        <section class="card facts">
          <div class="actions"><button type="button" class="solid large">Edit demographics</button></div>
          <dl class="grid">
            <div v-for="field in intro" :key="field.label"><dt>{{ field.label }}</dt><dd>{{ field.value }}</dd></div>
          </dl>
          <div>
            <h3>Aliases</h3>
            <ul>
              <li v-for="alias in aliases" :key="alias">{{ alias }}<button type="button" class="edit">Edit</button></li>
            </ul>
            <button type="button" class="solid">Add alias</button>
          </div>
          <div>
            <h3>Phones</h3>
            <ul>
              <li><span>229-339-7080 <span class="muted">Cell</span></span><button type="button" class="edit">Edit</button></li>
            </ul>
            <button type="button" class="solid">Add phone number</button>
          </div>
          <dl class="grid">
            <div v-for="field in details" :key="field.label"><dt>{{ field.label }}</dt><dd>{{ field.value }}</dd></div>
          </dl>
        </section>

        <section class="card place">
          <h2>Current residence</h2>
          <p class="note">248 Sam Caldwell Lane, Ocilla, GA 31774, Irwin. The gold circle is a 1,000-foot radius around the residence. Red circles are safe spaces.</p>
          <div class="map">
            <svg class="chart" viewBox="0 0 1630 1196" preserveAspectRatio="xMidYMid slice" role="img" aria-label="Map of Ocilla">
              <defs>
                <pattern id="marsh" width="52" height="40" patternUnits="userSpaceOnUse">
                  <path d="M2 6h16M30 16h14M10 27h15M36 36h12" stroke="#6cb0c4" stroke-width="3" />
                </pattern>
              </defs>
              <rect width="1630" height="1196" fill="#f2efe9" />
              <g v-for="s in sheets" :key="s.at" :transform="s.at">
                <path v-if="s.marsh" :d="s.marsh" fill="#add19e" />
                <path v-if="s.marsh" :d="s.marsh" fill="url(#marsh)" />
                <path :d="s.wood" fill="#acdf9f" />
                <path :d="s.golf" fill="#def6c0" />
                <path :d="s.green" fill="#aacbaf" />
                <path :d="s.teal" fill="#aaf0cc" />
                <path :d="s.pale" fill="#ffffdc" />
                <path v-if="s.reserve" class="line reserve" :d="s.reserve" />
                <path class="line stream" :d="s.streams" />
                <path class="line river" :d="s.river" />
                <path class="water" :d="s.water" />
                <path class="line stripe" :d="s.stripes" />
                <path class="line bog" :d="bogPath(s.bogs)" />
                <path class="line track" :d="s.tracks" />
                <path class="line dam" :d="s.dams" />
              </g>
              <path d="M152 1147l21-2-3 23-11 1z" fill="#f2efe9" />
              <g v-for="s in sheets" :key="s.at" :transform="s.at">
                <path class="line minor-edge" :d="s.minor" />
                <path class="line tertiary-edge" :d="s.tertiary" />
              </g>
              <g v-for="s in sheets" :key="s.at" :transform="s.at">
                <path class="line minor" :d="s.minor" />
                <path class="line tertiary" :d="s.tertiary" />
              </g>
              <g v-for="s in sheets" :key="s.at" :transform="s.at">
                <path class="line secondary-edge" :d="s.secondary" />
                <path class="line primary-edge" :d="s.primary" />
              </g>
              <g v-for="s in sheets" :key="s.at" :transform="s.at">
                <path class="line secondary" :d="s.secondary" />
                <path class="line primary" :d="s.primary" />
              </g>
              <g v-for="s in sheets" :key="s.at" :transform="s.at">
                <path class="line border" :d="s.border" />
              </g>
              <path d="M0 199h1630M0 583h1630M0 967h1630" stroke="#fff" stroke-opacity=".8" />
              <text v-for="n in roadNames" :key="n.text + n.x" class="road" :class="n.kind" :text-anchor="n.end ? 'end' : 'middle'" dy="4" :transform="`translate(${n.x} ${n.y}) rotate(${n.turn})`">{{ n.text }}</text>
              <path id="county-line" d="M61 980Q64 1034 124 1060" fill="none" />
              <text class="county-name"><textPath href="#county-line">Irwin County</textPath></text>
              <text class="town" x="1365" y="428">Ocilla</text>
              <g v-for="s in shields" :key="s.x" class="shield" :class="s.kind">
                <rect :x="s.x" :y="s.y" :width="s.w" :height="s.lines.length > 1 ? 44 : 26" rx="3" />
                <text v-for="(line, i) in s.lines" :key="line" :x="s.x + s.w / 2" :y="s.y + 19 + i * 18" text-anchor="middle">{{ line }}</text>
              </g>
              <g stroke-width="3">
                <circle cx="154" cy="773" r="28" fill="#e9c46a" fill-opacity=".35" stroke="#0c2340" />
                <circle cx="154" cy="773" r="11" fill="#0c2340" />
                <g fill="#b91c1c">
                  <circle cx="1338" cy="421" r="28" fill="#ef4444" fill-opacity=".18" stroke="#b91c1c" />
                  <circle cx="1338" cy="421" r="11" />
                  <circle cx="1478" cy="569" r="28" fill="#ef4444" fill-opacity=".18" stroke="#b91c1c" />
                  <circle cx="1478" cy="569" r="11" />
                </g>
              </g>
            </svg>
            <div class="zoom">
              <button type="button" aria-label="Zoom in"><svg viewBox="0 0 20 20"><path d="M1 10H19M10 1V19" /></svg></button>
              <button type="button" aria-label="Zoom out"><svg viewBox="0 0 20 20"><path d="M1 10H19" /></svg></button>
            </div>
            <div class="credit">
              <a href="#leaflet"><svg viewBox="0 0 12 8" aria-hidden="true"><path fill="#4c7be1" d="M0 0h12v4H0z" /><path fill="#ffd500" d="M0 4h12v3H0z" /><path fill="#e0bc00" d="M0 7h12v1H0z" /></svg>Leaflet</a> | © OpenStreetMap
            </div>
          </div>
        </section>
      </div>
    </main>
  </div>
</template>

<style>
body { background: #f9fafc; }
</style>

<style scoped>
* { box-sizing: border-box; margin: 0; padding: 0; }
.ribbon { height: 4px; border-bottom: 1px solid #b8892f; background: linear-gradient(90deg, #f5e3ad, #e9c871 40%, #d4a03a); }
.shell {
  min-height: calc(100vh - 4px);
  border-left: 5px solid #0c2340;
  background: #f9fafc;
  color: #111827;
  font: 500 23px/36px Inter, "Liberation Sans", sans-serif;
}
.page { display: flex; flex-direction: column; align-items: flex-start; padding: 36px 24px 75px 36px; }
button { font: inherit; cursor: pointer; }
.back {
  display: flex; align-items: center; gap: 12px; height: 56px; padding: 0 25px 0 24px;
  border: 1px solid #0c2340; border-radius: 24px; color: #0c2340; font-size: 20px; text-decoration: none;
}
.back svg { width: 24px; fill: none; stroke: currentColor; stroke-width: 2; }
h1 { margin-top: 18px; font-size: 35px; font-weight: 600; line-height: 48px; }
.agency { margin-top: 6px; color: #6b7280; font-size: 20px; font-weight: 400; line-height: 30px; }
.tabs { display: flex; align-self: stretch; gap: 13px; height: 73px; margin-top: 32px; box-shadow: inset 0 -1px #e5e7eb; }
.tab {
  display: flex; align-items: center; gap: 12px; padding: 0 24px; border: 0 solid transparent; border-width: 3px 0;
  background: none; color: #6b7280; font-size: 20px;
}
.tab.active { border-bottom-color: #0c2340; color: #0c2340; }
.tab svg { width: 24px; }
.chevron { fill: none; stroke: currentColor; stroke-width: 2; }
.gear { fill: currentColor; }
.columns { display: grid; grid-template-columns: 1fr 1fr; gap: 24px; align-self: stretch; margin-top: 24px; }
.card { display: flex; flex-direction: column; padding: 24px; border: 1px solid #e5e7eb; border-radius: 24px; background: #fff; }
.facts { gap: 24px; }
.actions { display: flex; justify-content: flex-end; }
.solid { height: 54px; padding: 0 18px; border: 0; border-radius: 24px; background: #0c2340; color: #fff; font-size: 20px; font-weight: 600; }
.solid.large { height: 60px; padding: 0 24px; }
.grid { display: grid; grid-template-columns: 1fr 1fr; gap: 24px; }
dt, h3 { color: #6b7280; font-size: 20px; font-weight: 400; line-height: 30px; }
ul { margin-bottom: 18px; list-style: none; }
li { display: flex; align-items: center; justify-content: space-between; }
.muted { color: #6b7280; font-weight: 400; }
.edit { height: 50px; padding: 0 19px; border: 1px solid #0c2340; border-radius: 24px; background: #fff; color: #0c2340; font-size: 20px; }
h2 { font-size: 26px; font-weight: 600; line-height: 42px; }
.note { margin: 6px 0 18px; color: #6b7280; font-size: 20px; font-weight: 400; line-height: 30px; }
.map { position: relative; flex: 1; overflow: hidden; border-radius: 24px; }
.chart { position: absolute; inset: 0; width: 100%; height: 100%; }
.line { fill: none; stroke-linejoin: round; vector-effect: non-scaling-stroke; }
.stream { stroke: #a9d7e4; stroke-width: 2; stroke-dasharray: 8 5; }
.river { stroke: #aad3df; stroke-width: 3; }
.water { fill: #aad3df; stroke: #aad3df; stroke-width: 2; stroke-linejoin: round; vector-effect: non-scaling-stroke; }
.stripe { stroke: #aad3df; stroke-width: 2; }
.bog { stroke: #8fc0f2; stroke-width: 2; }
.track { stroke: #d8bf98; stroke-width: 2; stroke-dasharray: 8 4 2 4; }
.dam { stroke: #85898b; stroke-width: 3; }
.reserve { stroke: #abd3a5; stroke-width: 6; }
.border { stroke: #bba3bf; stroke-opacity: .8; stroke-width: 3; stroke-dasharray: 9 3 3 3; }
.minor-edge { stroke: #d6d4d0; stroke-width: 6; }
.minor { stroke: #f7f6f3; stroke-width: 4; }
.tertiary-edge { stroke: #bdbdbb; stroke-width: 8; }
.tertiary { stroke: #fff; stroke-width: 5; }
.secondary-edge { stroke: #bcc27a; stroke-width: 11; }
.secondary { stroke: #f6fabf; stroke-width: 8; }
.primary-edge { stroke: #d1a468; stroke-width: 11; }
.primary { stroke: #fcd6a4; stroke-width: 8; }
text { font-family: "Noto Sans", sans-serif; }
.road { fill: #40382c; font-size: 12px; paint-order: stroke; stroke-width: 2px; }
.yellow { stroke: #f6fabf; }
.orange { stroke: #fcd6a4; }
.county-name { fill: #a287a8; font-size: 15px; paint-order: stroke; stroke: #f2efe9; stroke-width: 2px; }
.town { fill: #444; font-size: 19px; paint-order: stroke; stroke: #f2efe9; stroke-width: 2px; }
.shield { font-size: 16px; }
.county rect { fill: #efefef; stroke: #c6c6c6; stroke-width: 2px; }
.county text { fill: #555; }
.state rect { fill: #f0f0d2; stroke: #ccd09a; stroke-width: 2px; }
.state text { fill: #5a5f33; }
.federal rect { fill: #f6e4d2; stroke: #e0b98c; stroke-width: 2px; }
.federal text { fill: #6f5130; }
.zoom { position: absolute; top: 15px; left: 15px; border: 3px solid rgba(0, 0, 0, .2); border-radius: 6px; background-clip: padding-box; }
.zoom button { display: grid; place-items: center; width: 45px; height: 45px; border: 0; background: #fff; }
.zoom button:first-child { height: 46px; border-bottom: 1px solid #ccc; border-radius: 3px 3px 0 0; }
.zoom button:last-child { border-radius: 0 0 3px 3px; }
.zoom svg { width: 20px; fill: none; stroke: #000; stroke-width: 2; }
.zoom button:first-child svg { stroke-width: 3; }
.credit {
  position: absolute; right: 0; bottom: 0; padding: 0 7px; background: rgba(255, 255, 255, .8);
  color: #333; font: 18px/26px "Liberation Sans", Arial, sans-serif;
}
.credit a { color: #0078a8; text-decoration: none; }
.credit svg { width: 18px; margin-right: 6px; }
</style>
